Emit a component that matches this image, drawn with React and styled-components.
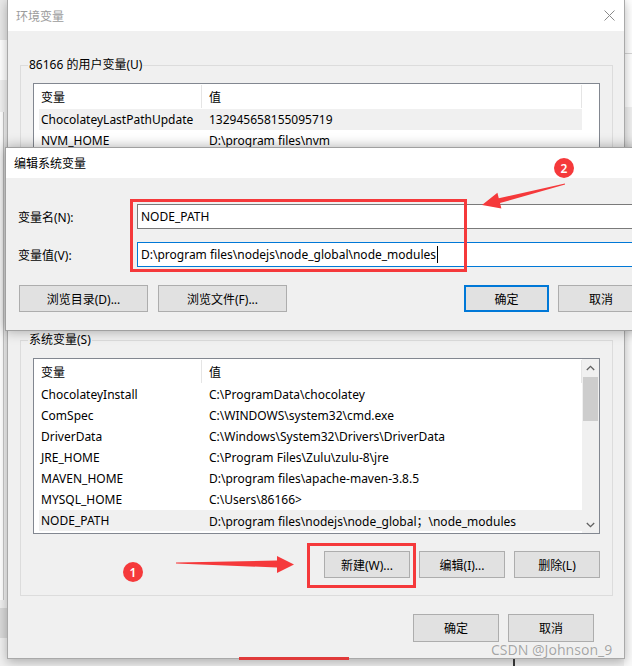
import React from "react";
import styled, { createGlobalStyle } from "styled-components";

const userVars = [
  ["ChocolateyLastPathUpdate", "132945658155095719", true],
  ["NVM_HOME", "D:\\program files\\nvm"],
];

const sysVars = [
  ["ChocolateyInstall", "C:\\ProgramData\\chocolatey"],
  ["ComSpec", "C:\\WINDOWS\\system32\\cmd.exe"],
  ["DriverData", "C:\\Windows\\System32\\Drivers\\DriverData"],
  ["JRE_HOME", "C:\\Program Files\\Zulu\\zulu-8\\jre"],
  ["MAVEN_HOME", "D:\\program files\\apache-maven-3.8.5"],
  ["MYSQL_HOME", "C:\\Users\\86166>"],
  ["NODE_PATH", "D:\\program files\\nodejs\\node_global；\\node_modules", true],
];

const App = () => {
  return (
    <>
      <GlobalStyle />
      <Desktop>
        <BackWindow $left={0} $width={8}>
          <BackBand $h={40} $tone="#e8e8e8" />
          <BackBand $h={40} $tone="#ffffff" />
          <BackBand $h={32} $tone="#f0f0f0" />
          <BackPanel $h={488} />
          <BackBand $h={8} $tone="#f0f0f0" />
          <BackBand $h={30} $tone="#d9d9d9" />
        </BackWindow>
        <BackWindow $left={624} $width={8}>
          <BackBand $h={53} $tone="#ffffff" />
          <BackBand $h={1} $tone="#d6d6d6" />
          <BackBand $h={53} $tone="#ffffff" />
          <BackBand $h={41} $tone="#f0f0f0" />
          <BackBand $h={519} $tone="#fafafa" />
        </BackWindow>

        <EnvWindow>
          <TitleBar>
            <WindowTitle $inactive>环境变量</WindowTitle>
            <CloseBox>
              <svg width="11" height="11" viewBox="0 0 11 11">
                <path d="M0.5 0.5 L10.5 10.5 M10.5 0.5 L0.5 10.5" stroke="#8a8a8a" strokeWidth="1" fill="none" />
              </svg>
            </CloseBox>
          </TitleBar>
          <Body>
            <GroupBox $h={261}>
              <GroupLabel>86166 的用户变量(U)</GroupLabel>
              <ListView $h={220}>
                <ListBody>
                  <HeaderRow>
                    <HeaderCell>变量</HeaderCell>
                    <HeaderCell>值</HeaderCell>
                  </HeaderRow>
                  {userVars.map(([name, value, sel]) => (
                    <DataRow key={name} $selected={sel}>
                      <Cell $first>{name}</Cell>
                      <Cell>{value}</Cell>
                    </DataRow>
                  ))}
                </ListBody>
                <Gutter />
              </ListView>
            </GroupBox>

            <GroupBox $h={256} $top={14}>
              <GroupLabel>系统变量(S)</GroupLabel>
              <ListView $h={176}>
                <ListBody>
                  <HeaderRow>
                    <HeaderCell>变量</HeaderCell>
                    <HeaderCell>值</HeaderCell>
                  </HeaderRow>
                  {sysVars.map(([name, value, sel]) => (
                    <DataRow key={name} $selected={sel}>
                      <Cell $first>{name}</Cell>
                      <Cell>{value}</Cell>
                    </DataRow>
                  ))}
                </ListBody>
                <ScrollBar>
                  <ArrowBtn>
                    <svg width="9" height="6" viewBox="0 0 9 6">
                      <path d="M0.8 5 L4.5 1.3 L8.2 5" stroke="#606060" strokeWidth="1.3" fill="none" />
                    </svg>
                  </ArrowBtn>
                  <Thumb />
                  <TrackFill />
                  <ArrowBtn>
                    <svg width="9" height="6" viewBox="0 0 9 6">
                      <path d="M0.8 1 L4.5 4.7 L8.2 1" stroke="#606060" strokeWidth="1.3" fill="none" />
                    </svg>
                  </ArrowBtn>
                </ScrollBar>
              </ListView>
              <ButtonRow>
                <WinButton>新建(W)...</WinButton>
                <WinButton>编辑(I)...</WinButton>
                <WinButton>删除(L)</WinButton>
              </ButtonRow>
            </GroupBox>

            <Footer>
              <WinButton $h={28}>确定</WinButton>
              <WinButton $h={28}>取消</WinButton>
            </Footer>
          </Body>
        </EnvWindow>

        <EditDialog>
          <DialogTitle>编辑系统变量</DialogTitle>
          <DialogBody>
            <FormGrid>
              <FieldLabel>变量名(N):</FieldLabel>
              <Field>NODE_PATH</Field>
              <FieldLabel>变量值(V):</FieldLabel>
              <Field $focused>
                D:\program files\nodejs\node_global\node_modules
                <Caret />
              </Field>
            </FormGrid>
            <DialogButtons>
              <WinButton $w={129}>浏览目录(D)...</WinButton>
              <WinButton $w={129}>浏览文件(F)...</WinButton>
              <Spacer />
              <WinButton $w={85} $default>确定</WinButton>
              <WinButton>取消</WinButton>
            </DialogButtons>
          </DialogBody>
        </EditDialog>

        <Annotations width="632" height="666" viewBox="0 0 632 666">
          <rect x="239" y="657" width="110" height="3" fill="#e03a3a" />
          <rect x="513" y="659" width="2" height="7" fill="#333" />
          <rect x="131.5" y="200.5" width="334" height="70" fill="none" stroke="#f5393b" strokeWidth="3" />
          <rect x="308.5" y="544.5" width="106" height="42" fill="none" stroke="#f5393b" strokeWidth="3" />
          <polygon
            points="564.9,183.5 498.8,198.2 497.4,192.8 482,205 501.4,208.4 500,203 565.1,184.5"
            fill="#f5393b"
          />
          <polygon
            points="176,562.6 277,560.5 277,556 294,564.5 277,573 277,567.5 176,563.6"
            fill="#f5393b"
          />
          <circle cx="564" cy="168" r="10" fill="#f5393b" />
          <text x="564" y="172.5" fill="#fff" fontSize="12" fontWeight="600" textAnchor="middle" fontFamily="Noto Sans, sans-serif">2</text>
          <circle cx="133" cy="572" r="10" fill="#f5393b" />
          <text x="133" y="576.5" fill="#fff" fontSize="12" fontWeight="600" textAnchor="middle" fontFamily="Noto Sans, sans-serif">1</text>
        </Annotations>

        <Watermark>CSDN @Johnson_9</Watermark>
      </Desktop>
    </>
  );
};

export default App;

const GlobalStyle = createGlobalStyle`
  *, *::before, *::after { box-sizing: border-box; }
  html, body {
    margin: 0;
    padding: 0;
    background: #f0f0f0;
  }
  body {
    font-family: "Noto Sans", "Noto Sans CJK SC", sans-serif;
    font-size: 12px;
    color: #000;
  }
`;

const Desktop = styled.div`
  position: relative;
  width: 632px;
  height: 666px;
  overflow: hidden;
  background: #f0f0f0;
`;

const BackWindow = styled.div`
  position: absolute;
  top: 0;
  left: ${(p) => p.$left}px;
  width: ${(p) => p.$width}px;
  height: 666px;
  display: flex;
  flex-direction: column;
  background: #f0f0f0;
`;

const BackBand = styled.div`
  height: ${(p) => p.$h}px;
  flex-shrink: 0;
  background: ${(p) => p.$tone};
`;

const BackPanel = styled.div`
  height: ${(p) => p.$h}px;
  width: 4px;
  flex-shrink: 0;
  background: #fff;
  border-right: 1px solid #c8c8c8;
`;

const EnvWindow = styled.section`
  position: absolute;
  left: 7px;
  top: -1px;
  width: 618px;
  height: 660px;
  border: 1px solid #a9a9a9;
  background: #f0f0f0;
  box-shadow: 0 3px 10px rgba(0, 0, 0, 0.28);
  display: flex;
  flex-direction: column;
`;

const TitleBar = styled.div`
  height: 31px;
  flex-shrink: 0;
  background: #fff;
  display: flex;
  align-items: center;
  justify-content: space-between;
  padding-left: 8px;
`;

const WindowTitle = styled.span`
  color: ${(p) => (p.$inactive ? "#9b9b9b" : "#000")};
`;

const CloseBox = styled.div`
  width: 30px;
  height: 31px;
  display: flex;
  align-items: center;
  justify-content: center;
`;

const Body = styled.div`
  flex: 1;
  display: flex;
  flex-direction: column;
  padding: 34px 11px 0 12px;
`;

const GroupBox = styled.div`
  height: ${(p) => p.$h}px;
  margin-top: ${(p) => p.$top || 0}px;
  flex-shrink: 0;
  border: 1px solid #dcdcdc;
  padding: 0 12px;
  display: flex;
  flex-direction: column;
`;

const GroupLabel = styled.div`
  align-self: flex-start;
  margin: -9px 0 0 -5px;
  padding: 0 1px;
  line-height: 16px;
  background: #f0f0f0;
  white-space: nowrap;
`;

const ListView = styled.div`
  margin-top: 10px;
  height: ${(p) => p.$h}px;
  flex-shrink: 0;
  border: 1px solid #828790;
  background: #fff;
  display: flex;
  overflow: hidden;
`;

const ListBody = styled.div`
  flex: 1;
  min-width: 0;
  display: flex;
  flex-direction: column;
`;

const HeaderRow = styled.div`
  height: 25px;
  flex-shrink: 0;
  display: grid;
  grid-template-columns: 168px 1fr;
  padding: 1px 0;
`;

const HeaderCell = styled.div`
  display: flex;
  align-items: center;
  padding-left: 7px;
  border-right: 1px solid #e5e5e5;
`;

const DataRow = styled.div`
  height: 21px;
  flex-shrink: 0;
  margin-left: 5px;
  display: grid;
  grid-template-columns: 163px 1fr;
  align-items: center;
  background: ${(p) => (p.$selected ? "#f0f0f0" : "transparent")};
`;

const Cell = styled.div`
  padding-left: ${(p) => (p.$first ? 2 : 7)}px;
  white-space: nowrap;
  overflow: hidden;
`;

const Gutter = styled.div`
  width: 17px;
  flex-shrink: 0;
`;

const ScrollBar = styled.div`
  width: 17px;
  flex-shrink: 0;
  background: #f0f0f0;
  display: flex;
  flex-direction: column;
`;

const ArrowBtn = styled.div`
  height: 17px;
  flex-shrink: 0;
  display: flex;
  align-items: center;
  justify-content: center;
`;

const Thumb = styled.div`
  height: 44px;
  margin: 1px 1px 0;
  flex-shrink: 0;
  background: #cdcdcd;
`;

const TrackFill = styled.div`
  flex: 1;
`;

const ButtonRow = styled.div`
  display: flex;
  justify-content: flex-end;
  gap: 9px;
  margin-top: 17px;
`;

const Footer = styled.div`
  display: flex;
  justify-content: flex-end;
  gap: 9px;
  margin-top: 18px;
  padding-right: 19px;
`;

const WinButton = styled.button`
  width: ${(p) => p.$w || 86}px;
  height: ${(p) => p.$h || 27}px;
  flex-shrink: 0;
  padding: 0;
  font: inherit;
  color: #000;
  background: #e1e1e1;
  border: ${(p) => (p.$default ? "2px solid #0078d7" : "1px solid #adadad")};
  white-space: nowrap;
`;

const EditDialog = styled.section`
  position: absolute;
  left: 5px;
  top: 147px;
  width: 658px;
  border: 1px solid #a0a0a0;
  background: #f0f0f0;
  box-shadow: 0 0 12px rgba(0, 0, 0, 0.33);
  display: flex;
  flex-direction: column;
`;

const DialogTitle = styled.div`
  height: 30px;
  background: #fff;
  display: flex;
  align-items: center;
  padding-left: 8px;
`;

const DialogBody = styled.div`
  display: flex;
  flex-direction: column;
  padding: 26px 18px 18px 12px;
`;

const FormGrid = styled.div`
  display: grid;
  grid-template-columns: 119px 1fr;
  row-gap: 13px;
  align-items: center;
`;

const FieldLabel = styled.div`
  white-space: nowrap;
`;

const Field = styled.div`
  height: 25px;
  background: #fff;
  border: 1px solid ${(p) => (p.$focused ? "#0078d7" : "#7a7a7a")};
  padding-left: 3px;
  display: flex;
  align-items: center;
  white-space: nowrap;
`;

const Caret = styled.span`
  width: 1px;
  height: 17px;
  margin-left: 1px;
  background: #000;
`;

const DialogButtons = styled.div`
  display: flex;
  gap: 10px;
  margin-top: 18px;
  padding-left: 1px;

  & > button:last-child {
    margin-left: -1px;
  }
`;

const Spacer = styled.div`
  flex: 1;
`;

const Annotations = styled.svg`
  position: absolute;
  left: 0;
  top: 0;
  pointer-events: none;
`;

const Watermark = styled.div`
  position: absolute;
  left: 491px;
  top: 640px;
  font-size: 14px;
  line-height: 20px;
  color: rgba(150, 150, 150, 0.85);
  text-shadow: 0 0 1px #fff;
  white-space: nowrap;
`;
